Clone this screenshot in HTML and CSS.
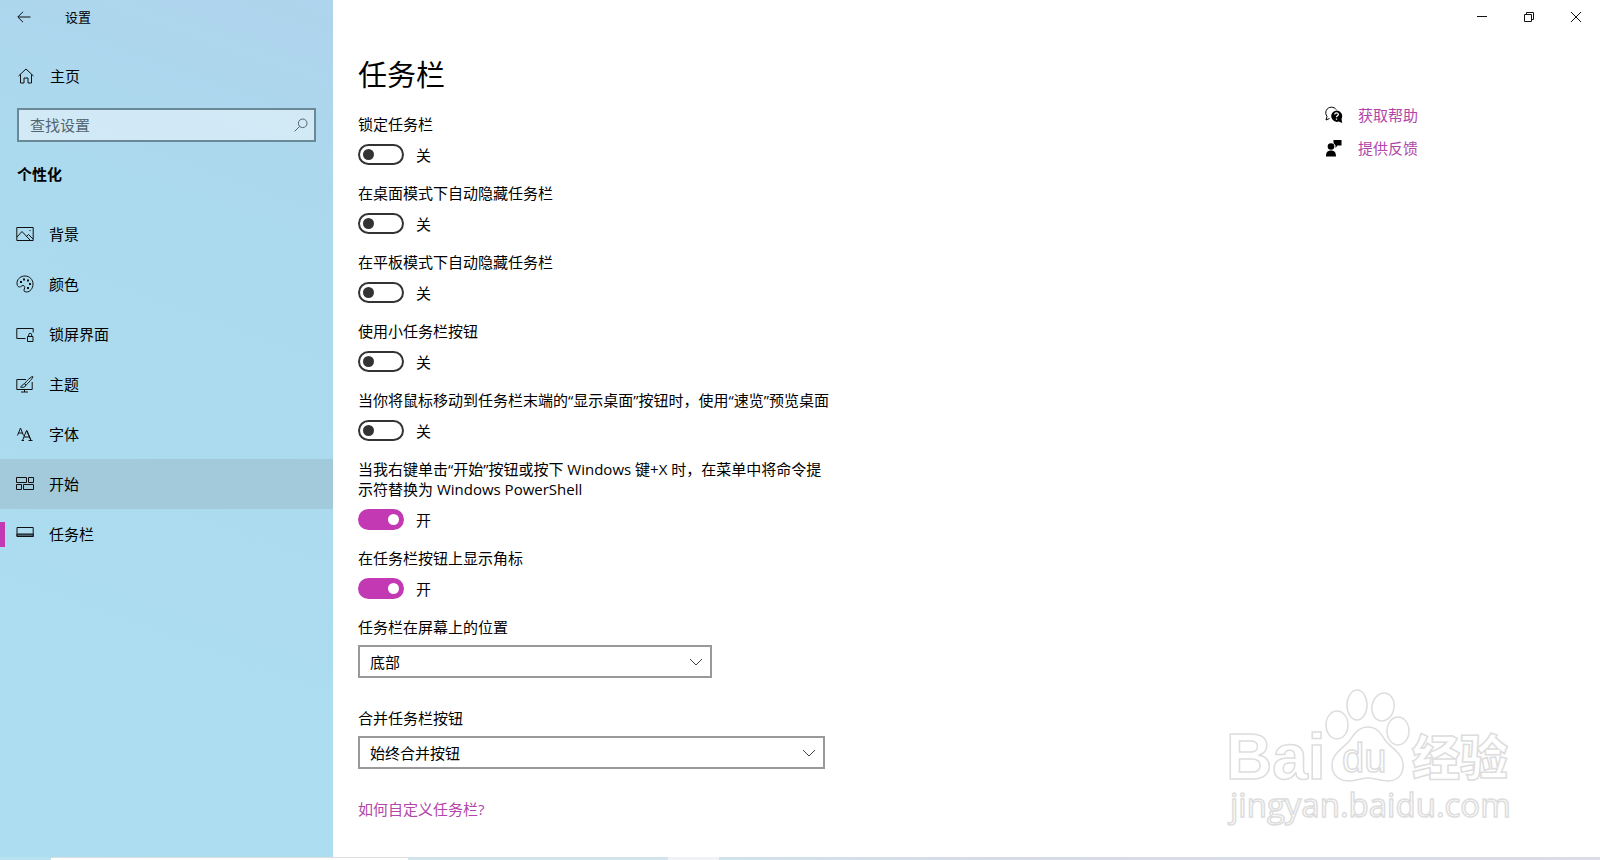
FILE: index.html
```
<!DOCTYPE html>
<html lang="zh-CN">
<head>
    <meta charset="UTF-8">
    <meta name="viewport" content="width=device-width, initial-scale=1.0">
    <title>设置</title>
    <link rel="stylesheet" href="styles.css">
</head>
<body>

<div class="window">
    <div class="sidebar">
        <header class="sidebar-title">
            <button class="back" type="button" aria-label="返回">
                <svg width="14" height="12" viewBox="0 0 14 12"><path d="M13.5 6H1M6 .8L.8 6 6 11.2"/></svg>
            </button>
            <span>设置</span>
        </header>

        <a class="home" href="#">
            <svg width="18" height="18" viewBox="0 0 18 18"><path d="M1.500 9L9 2l7.500 7M3.500 7.500v8.500h3.500v-5h4v5h3.500V7.500"/></svg>
            主页
        </a>

        <!-- Search -->
        <div class="search">
            <input type="text" placeholder="查找设置" aria-label="查找设置">
            <svg width="14" height="14" viewBox="0 0 14 14"><circle cx="8.700" cy="5.300" r="4.300"/><path d="M5.600 8.400L.7 13.300"/></svg>
        </div>

        <h2>个性化</h2>

        <nav>
            <a href="#">
                <svg width="18" height="18" viewBox="0 0 18 18"><path d="M.8 2.500h16.400v13H.8zM1 12l5-5.500 8 8.500M10.500 11.500l2-2 4.500 4.500M13.500 5.500h1"/></svg>
                背景
            </a>
            <a href="#">
                <svg width="18" height="18" viewBox="0 0 18 18"><path d="M1 7.500C1.500 3.500 5 1 9 1c4.500 0 8 3.500 8 8s-3 8-6.500 8c-2.500 0-3-1.500-2.200-3 .9-1.700.5-3.500-1.300-3.500-1.500 0-2 1.500-3.500 1.500C1.500 12 .8 9.500 1 7.500z"/><path class="solid" d="M4 6h2v2H4zM7 3.500h2v2H7zM11 4.500h2v2h-2zM13 8h2v2h-2zM11 12h2v2h-2z"/></svg>
                颜色
            </a>
            <a href="#">
                <svg width="18" height="18" viewBox="0 0 18 18"><path d="M9.500 13.500H.8V3.500h16.400v4M11.500 11.500h5.500v5h-5.500zM12.700 11.500V9.800a1.500 1.500 0 0 1 3 0v1.700"/></svg>
                锁屏界面
            </a>
            <a href="#">
                <svg width="18" height="18" viewBox="0 0 18 18"><path d="M10 4.500H.8v10h15.400V7M5 17h7M8.500 14.500V17M16.800 1.500c-1-.7-7.300 5.500-8.300 7.300l1.500 1.300c1.800-1.500 7.600-7.600 6.800-8.600zM8.500 9c-2-.4-2 2-4 3 2 .8 5.300.3 5.300-2"/></svg>
                主题
            </a>
            <a href="#">
                <svg width="18" height="18" viewBox="0 0 18 18"><path d="M1.500 10.500L4.500 3l3 7.500M2.500 8h4M6.500 15.500l4-10 4.500 10M8 12h5.500M5.500 15.500h2.500M12.500 15.500h4M11 5.500l4 10"/></svg>
                字体
            </a>
            <a class="hover" href="#">
                <svg width="18" height="18" viewBox="0 0 18 18"><path d="M.5 2.500h10v5h-10zM12.500 2.500h5v5h-5zM.5 9.500h5v5h-5zM7.500 9.500h10v5h-10z"/></svg>
                开始
            </a>
            <a class="current" href="#" aria-current="page">
                <svg width="18" height="18" viewBox="0 0 18 18"><path d="M1 2.500h16.200v9H1z"/><path class="bar" d="M1 9h16.200v2.500H1z"/></svg>
                任务栏
            </a>
        </nav>
    </div>

    <div class="page">
        <div class="caption">
            <button type="button" aria-label="最小化"><svg width="12" height="12" viewBox="0 0 12 12"><path d="M1 5.500h10"/></svg></button>
            <button type="button" aria-label="还原"><svg width="12" height="12" viewBox="0 0 12 12"><path d="M1.500 3.500h7v7h-7zM3.500 3.500v-2h7v7h-2"/></svg></button>
            <button type="button" aria-label="关闭"><svg width="12" height="12" viewBox="0 0 12 12"><path d="M1 1l10 10M11 1L1 11"/></svg></button>
        </div>

        <div class="content">
            <main>
                <h1>任务栏</h1>

                <div class="setting">
                    <label for="lock">锁定任务栏</label>
                    <div class="toggle"><input type="checkbox" id="lock"><span>关</span></div>
                </div>
                <div class="setting">
                    <label for="hide-desktop">在桌面模式下自动隐藏任务栏</label>
                    <div class="toggle"><input type="checkbox" id="hide-desktop"><span>关</span></div>
                </div>
                <div class="setting">
                    <label for="hide-tablet">在平板模式下自动隐藏任务栏</label>
                    <div class="toggle"><input type="checkbox" id="hide-tablet"><span>关</span></div>
                </div>
                <div class="setting">
                    <label for="small">使用小任务栏按钮</label>
                    <div class="toggle"><input type="checkbox" id="small"><span>关</span></div>
                </div>
                <div class="setting">
                    <label for="peek">当你将鼠标移动到任务栏末端的“显示桌面”按钮时，使用“速览”预览桌面</label>
                    <div class="toggle"><input type="checkbox" id="peek"><span>关</span></div>
                </div>
                <div class="setting">
                    <label for="powershell">当我右键单击“开始”按钮或按下 Windows 键+X 时，在菜单中将命令提示符替换为 Windows PowerShell</label>
                    <div class="toggle"><input type="checkbox" id="powershell" checked><span>开</span></div>
                </div>
                <div class="setting">
                    <label for="badges">在任务栏按钮上显示角标</label>
                    <div class="toggle"><input type="checkbox" id="badges" checked><span>开</span></div>
                </div>

                <div class="choice">
                    <label for="position">任务栏在屏幕上的位置</label>
                    <div class="select narrow">
                        <select id="position">
                            <option>底部</option>
                        </select>
                        <svg width="14" height="8" viewBox="0 0 14 8"><path d="M1 1l6 6 6-6"/></svg>
                    </div>
                </div>
                <div class="choice">
                    <label for="combine">合并任务栏按钮</label>
                    <div class="select">
                        <select id="combine">
                            <option>始终合并按钮</option>
                        </select>
                        <svg width="14" height="8" viewBox="0 0 14 8"><path d="M1 1l6 6 6-6"/></svg>
                    </div>
                </div>

                <a class="link" href="#">如何自定义任务栏?</a>
            </main>

            <aside>
                <a class="link" href="#">
                    <svg width="18" height="18" viewBox="0 0 18 18"><path class="outline" d="M4.500 12.500L1 14l1-3.500C-.8 6.500 1.500 1.200 6.500 1.200c2 0 3.800 1 4.700 2.300"/><path d="M11.500 4.500a5.700 5.700 0 0 1 5 8.400l.7 4-3.500-1.300a5.700 5.700 0 1 1-2.200-11.100z"/><path class="mark" d="M9.700 8.500c.2-2.200 3.800-2 3.600.1-.1 1.200-1.800 1.300-1.800 2.700M11.500 12.500v1.200"/></svg>
                    获取帮助
                </a>
                <a class="link" href="#">
                    <svg width="18" height="18" viewBox="0 0 18 18"><circle cx="6" cy="7.500" r="3.300"/><path d="M1 17.500c0-4 1.500-6 5-6s5 2 5 6zM8.500 1h8v5.500h-4L10.500 9V6.500L8.500 4z"/></svg>
                    提供反馈
                </a>
            </aside>
        </div>
    </div>

    <!-- Watermark -->
    <svg class="watermark" width="290" height="150" viewBox="0 0 290 150">
        <text class="bai" x="0" y="93">Bai</text>
        <ellipse cx="111" cy="39" rx="11" ry="14"/>
        <ellipse cx="131" cy="19" rx="10" ry="15"/>
        <ellipse cx="157" cy="21" rx="11" ry="14" transform="rotate(12 157 21)"/>
        <ellipse cx="172" cy="45" rx="11" ry="14"/>
        <path d="M142 41c-9 0-13 6-18 13-6 8-18 13-18 25 0 10 7 16 17 16 8 0 13-3 19-3s12 3 20 3c10 0 16-7 15-18-1-10-13-16-18-23-5-8-9-13-17-13z"/>
        <text class="du" x="116" y="86">du</text>
        <text class="jingyan" x="186" y="89">经验</text>
        <text class="site" x="4" y="131">jingyan.baidu.com</text>
    </svg>
</div>

<footer class="desktop-edge">
    <div class="tile"></div>
    <div class="panel"></div>
    <div class="sky"></div>
    <div class="cloud"></div>
    <div class="horizon"></div>
</footer>

</body>
</html>
```
FILE: styles.css
```
* {
    box-sizing: border-box;
}

body {
    margin: 0;
    min-height: 100vh;
    display: flex;
    flex-direction: column;
    background: #fff;
    color: #000;
    font-family: "Open Sans", "Noto Sans CJK SC", sans-serif;
    font-size: 15px;
    line-height: 20px;
}

a {
    color: inherit;
    text-decoration: none;
}

button {
    padding: 0;
    border: none;
    background: none;
}

svg {
    flex: none;
    fill: none;
    stroke: #111;
    stroke-width: 1;
}

.window {
    position: relative;
    flex: 1;
    display: flex;
}

/* Sidebar */
.sidebar {
    width: 333px;
    flex: none;
    background: linear-gradient(200deg, #afd4ed 0%, #abd9ee 25%, #addef0 100%);
}

.sidebar-title {
    display: flex;
    align-items: center;
    height: 33px;
    padding-left: 17px;
    gap: 34px;
    font-size: 13px;
}

.back {
    display: flex;
}

.home {
    display: flex;
    align-items: center;
    gap: 15px;
    height: 50px;
    margin-top: 18px;
    padding-left: 17px;
}

.search {
    position: relative;
    margin: 7px 17px 0;
}

.search input {
    display: block;
    width: 100%;
    height: 34px;
    padding: 0 36px 0 11px;
    border: 2px solid #6a8896;
    border-radius: 0;
    background: rgba(255, 255, 255, 0.45);
    font: inherit;
}

.search input::placeholder {
    color: #536570;
}

.search svg {
    position: absolute;
    top: 10px;
    right: 8px;
    stroke: #536570;
}

h2 {
    margin: 22px 17px 25px;
    font-size: 15px;
    line-height: 20px;
}

nav a {
    display: flex;
    align-items: center;
    gap: 15px;
    height: 50px;
    padding-left: 16px;
}

nav .hover {
    background: #a3cada;
}

nav .current::before {
    content: "";
    width: 5px;
    height: 25px;
    margin-left: -16px;
    margin-right: -4px;
    background: #c239b3;
}

.solid {
    fill: #111;
    stroke: none;
}

.bar {
    fill: #4c6470;
}

/* Page */
.page {
    flex: 1;
    min-width: 0;
}

.caption {
    display: flex;
    justify-content: flex-end;
    padding-right: 1px;
}

.caption button {
    display: flex;
    align-items: center;
    justify-content: center;
    width: 47px;
    height: 34px;
}

.content {
    display: grid;
    grid-template-columns: 1fr 275px;
    padding-left: 25px;
}

main {
    max-width: 476px;
}

h1 {
    margin: 20px 0 18px;
    font-size: 29px;
    font-weight: 400;
    line-height: 42px;
}

label {
    display: block;
}

.setting {
    margin-bottom: 18px;
}

.toggle {
    display: flex;
    align-items: center;
    gap: 12px;
    height: 21px;
    margin-top: 10px;
}

.toggle input {
    appearance: none;
    display: flex;
    align-items: center;
    width: 46px;
    height: 21px;
    margin: 0;
    padding: 0 3px;
    border: 2px solid #333;
    border-radius: 11px;
}

.toggle input::before {
    content: "";
    width: 11px;
    height: 11px;
    border-radius: 50%;
    background: #333;
}

.toggle input:checked {
    justify-content: flex-end;
    border-color: #c239b3;
    background: #c239b3;
}

.toggle input:checked::before {
    background: #fff;
}

.choice {
    margin-bottom: 30px;
}

.select {
    position: relative;
    max-width: 467px;
    margin-top: 8px;
}

.select.narrow {
    max-width: 354px;
}

.select select {
    appearance: none;
    display: block;
    width: 100%;
    height: 33px;
    padding: 0 36px 0 10px;
    border: 2px solid #999;
    border-radius: 0;
    background: #fff;
    color: #000;
    font: inherit;
}

.select svg {
    position: absolute;
    top: 13px;
    right: 9px;
    stroke: #444;
}

.link {
    color: #b146a8;
}

aside {
    display: flex;
    flex-direction: column;
    gap: 13px;
    padding-top: 71px;
}

aside .link {
    display: flex;
    align-items: center;
    gap: 15px;
}

aside svg {
    fill: #000;
    stroke: none;
}

aside .outline {
    fill: none;
    stroke: #000;
}

aside .mark {
    fill: none;
    stroke: #fff;
    stroke-width: 1.3;
}

/* Watermark */
.watermark {
    position: absolute;
    right: 84px;
    bottom: 21px;
    fill: #fff;
    stroke: #ddd;
    stroke-width: 1.5;
    pointer-events: none;
}

.bai {
    font: bold 64px "Liberation Sans", sans-serif;
}

.du {
    font: 40px "Liberation Sans", sans-serif;
}

.jingyan {
    font: 900 48px "Noto Sans CJK SC", sans-serif;
}

.site {
    font: 33px "Open Sans", sans-serif;
}

/* Strip of desktop below the window */
.desktop-edge {
    display: flex;
    height: 3px;
}

.tile {
    width: 51px;
    background: #b9e0ee;
}

.panel {
    width: 357px;
    border-top: 1px solid #ddd;
}

.sky {
    width: 260px;
    background: #d3e3eb;
}

.cloud {
    width: 51px;
    background: #f0f2f6;
}

.horizon {
    flex: 1;
    background: linear-gradient(90deg, #d0e2eb, #d6dbe8 30%, #dcdbe8);
}
```
